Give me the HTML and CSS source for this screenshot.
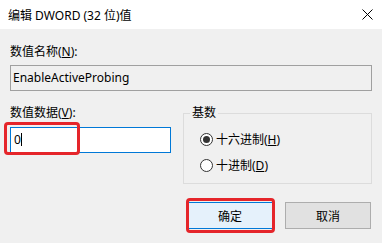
FILE: index.html
```html
<!DOCTYPE html>
<html lang="zh-CN">
<head>
    <meta charset="UTF-8">
    <meta name="viewport" content="width=device-width, initial-scale=1.0">
    <title>编辑 DWORD (32 位)值</title>
    <link rel="stylesheet" href="styles.css">
</head>
<body>
    <div class="titlebar">
        <span class="title">编辑 DWORD (32 位)值</span>
        <svg class="close" width="11" height="11" viewBox="0 0 11 11">
            <path d="M0.5 0.5L10.5 10.5M10.5 0.5L0.5 10.5" />
        </svg>
    </div>

    <div class="content">
        <div class="label label-name">数值名称(<u>N</u>):</div>
        <div class="field field-name">EnableActiveProbing</div>

        <div class="row">
            <div class="col-data">
                <div class="label">数值数据(<u>V</u>):</div>
                <div class="value-wrap">
                    <div class="field field-value">0<span class="caret"></span></div>
                    <!-- 빨간 표시박스 -->
                    <div class="mark mark-value"></div>
                </div>
            </div>

            <fieldset class="base">
                <legend>基数</legend>
                <div class="radio"><span class="dot checked"></span>十六进制(<u>H</u>)</div>
                <div class="radio"><span class="dot"></span>十进制(<u>D</u>)</div>
            </fieldset>
        </div>

        <div class="buttons">
            <div class="btn-wrap">
                <button class="btn btn-ok">确定</button>
                <div class="mark mark-ok"></div>
            </div>
            <button class="btn">取消</button>
        </div>
    </div>
</body>
</html>
```

FILE: styles.css
```css
/* 대화상자 공통 */
body {
    margin: 0;
    width: 382px;
    height: 243px;
    overflow: hidden;
    background: #f0f0f0;
    font-family: "Noto Sans", "Noto Sans CJK SC", sans-serif;
    font-size: 12px;
    color: #000;
}

u {
    text-decoration: underline;
    text-underline-offset: 1px;
}

/* 제목표시줄 */
.titlebar {
    height: 29px;
    background: #fff;
    display: flex;
    align-items: center;
    justify-content: space-between;
    padding: 0 9px 0 8px;
}

.close path {
    stroke: #000;
    stroke-width: 1;
    fill: none;
}

/* 본문 */
.content {
    padding: 15px 10px 0;
}

.label {
    line-height: 16px;
}

.field {
    box-sizing: border-box;
    height: 26px;
    line-height: 24px;
    padding-left: 2px;
}

.field-name {
    margin-top: 5px;
    border: 1px solid #a0a0a0;
    background: #f0f0f0;
}

.row {
    display: flex;
    gap: 12px;
    margin-top: 14px;
}

.col-data {
    width: 161px;
}

.value-wrap {
    position: relative;
    margin-top: 6px;
}

.field-value {
    border: 1px solid #0078d7;
    background: #fff;
    padding-left: 3px;
}

.caret {
    display: inline-block;
    width: 1px;
    height: 13px;
    background: #000;
    vertical-align: -2px;
}

/* 빨간 표시 */
.mark {
    position: absolute;
    box-sizing: border-box;
    border: 3px solid #e5252a;
    border-radius: 4px;
}

.mark-value {
    left: -6px;
    top: -5px;
    width: 76px;
    height: 33px;
}

.mark-ok {
    left: -1px;
    top: -4px;
    width: 89px;
    height: 35px;
}

/* 기수 그룹박스 */
.base {
    flex: 1;
    margin: 0;
    padding: 0 0 10px;
    border: 1px solid #dcdcdc;
}

.base legend {
    margin-left: 6px;
    padding: 0 2px;
    line-height: 16px;
}

.radio {
    display: flex;
    align-items: center;
    height: 16px;
    margin: 10px 0 0 16px;
}

.dot {
    box-sizing: border-box;
    width: 13px;
    height: 13px;
    border: 1px solid #333;
    border-radius: 50%;
    margin-right: 3px;
    position: relative;
    background: #fff;
}

.dot.checked::after {
    content: '';
    position: absolute;
    left: 2px;
    top: 2px;
    width: 7px;
    height: 7px;
    border-radius: 50%;
    background: #333;
}

/* 버튼 */
.buttons {
    display: flex;
    justify-content: flex-end;
    gap: 12px;
    margin-top: 18px;
    padding-right: 1px;
}

.btn-wrap {
    position: relative;
}

.btn {
    display: block;
    width: 86px;
    height: 27px;
    margin: 0;
    padding: 0;
    font: inherit;
    color: #000;
    background: #e1e1e1;
    border: 1px solid #adadad;
}

.btn-ok {
    background: #e5f1fb;
    border-color: #0078d7;
}
```
